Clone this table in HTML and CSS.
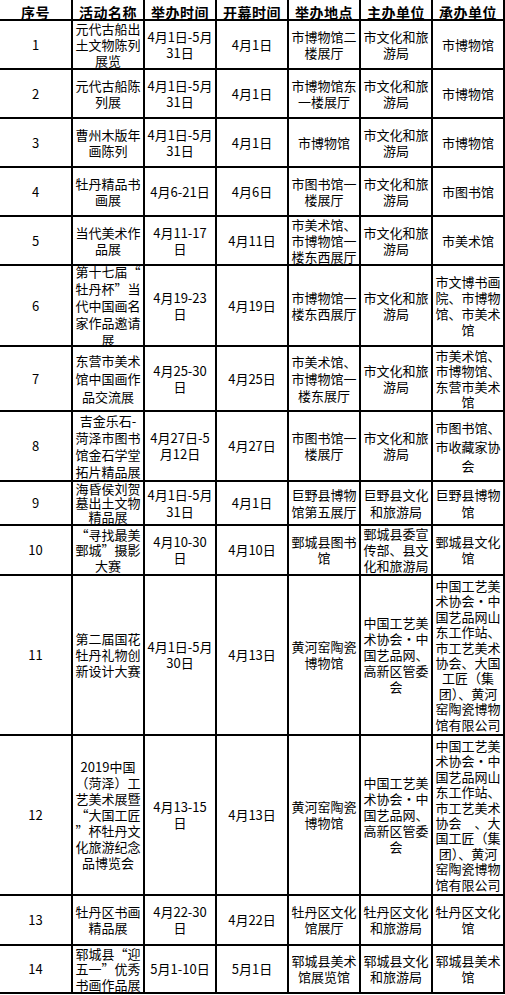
FILE: index.html
```html
<!DOCTYPE html>
<html lang="zh-CN">
<head>
<meta charset="utf-8">
<title>活动安排表</title>
<link rel="stylesheet" href="styles.css">
</head>
<body>
<div class="sheet">
  <div class="cell head">序号</div>
  <div class="cell head">活动名称</div>
  <div class="cell head">举办时间</div>
  <div class="cell head">开幕时间</div>
  <div class="cell head">举办地点</div>
  <div class="cell head">主办单位</div>
  <div class="cell head">承办单位</div>

  <div class="cell">1</div>
  <div class="cell">元代古船出<br>土文物陈列<br>展览</div>
  <div class="cell">4月1日-5月<br>31日</div>
  <div class="cell">4月1日</div>
  <div class="cell">市博物馆二<br>楼展厅</div>
  <div class="cell">市文化和旅<br>游局</div>
  <div class="cell">市博物馆</div>

  <div class="cell">2</div>
  <div class="cell">元代古船陈<br>列展</div>
  <div class="cell">4月1日-5月<br>31日</div>
  <div class="cell">4月1日</div>
  <div class="cell">市博物馆东<br>一楼展厅</div>
  <div class="cell">市文化和旅<br>游局</div>
  <div class="cell">市博物馆</div>

  <div class="cell">3</div>
  <div class="cell">曹州木版年<br>画陈列</div>
  <div class="cell">4月1日-5月<br>31日</div>
  <div class="cell">4月1日</div>
  <div class="cell">市博物馆</div>
  <div class="cell">市文化和旅<br>游局</div>
  <div class="cell">市博物馆</div>

  <div class="cell">4</div>
  <div class="cell">牡丹精品书<br>画展</div>
  <div class="cell">4月6-21日</div>
  <div class="cell">4月6日</div>
  <div class="cell">市图书馆一<br>楼展厅</div>
  <div class="cell">市文化和旅<br>游局</div>
  <div class="cell">市图书馆</div>

  <div class="cell">5</div>
  <div class="cell">当代美术作<br>品展</div>
  <div class="cell">4月11-17<br>日</div>
  <div class="cell">4月11日</div>
  <div class="cell">市美术馆、<br>市博物馆一<br>楼东西展厅</div>
  <div class="cell">市文化和旅<br>游局</div>
  <div class="cell">市美术馆</div>

  <div class="cell">6</div>
  <div class="cell lh17">第十七届“<br>牡丹杯”当<br>代中国画名<br>家作品邀请<br>展</div>
  <div class="cell">4月19-23<br>日</div>
  <div class="cell">4月19日</div>
  <div class="cell">市博物馆一<br>楼东西展厅</div>
  <div class="cell">市文化和旅<br>游局</div>
  <div class="cell">市文博书画<br>院、市博物<br>馆、市美术<br>馆</div>

  <div class="cell">7</div>
  <div class="cell lh18">东营市美术<br>馆中国画作<br>品交流展</div>
  <div class="cell">4月25-30<br>日</div>
  <div class="cell">4月25日</div>
  <div class="cell lh17">市美术馆、<br>市博物馆一<br>楼东展厅</div>
  <div class="cell">市文化和旅<br>游局</div>
  <div class="cell lh15">市美术馆、<br>市博物馆、<br>东营市美术<br>馆</div>

  <div class="cell">8</div>
  <div class="cell lh17">吉金乐石-<br>菏泽市图书<br>馆金石学堂<br>拓片精品展</div>
  <div class="cell">4月27日-5<br>月12日</div>
  <div class="cell">4月27日</div>
  <div class="cell">市图书馆一<br>楼展厅</div>
  <div class="cell">市文化和旅<br>游局</div>
  <div class="cell lh19">市图书馆、<br>市收藏家协<br>会</div>

  <div class="cell">9</div>
  <div class="cell lh14">海昏侯刘贺<br>墓出土文物<br>精品展</div>
  <div class="cell lh17">4月1日-5月<br>31日</div>
  <div class="cell">4月1日</div>
  <div class="cell lh17">巨野县博物<br>馆第五展厅</div>
  <div class="cell lh17">巨野县文化<br>和旅游局</div>
  <div class="cell lh17">巨野县博物<br>馆</div>

  <div class="cell">10</div>
  <div class="cell lh15">“寻找最美<br>鄄城”摄影<br>大赛</div>
  <div class="cell">4月10-30<br>日</div>
  <div class="cell">4月10日</div>
  <div class="cell">鄄城县图书<br>馆</div>
  <div class="cell">鄄城县委宣<br>传部、县文<br>化和旅游局</div>
  <div class="cell">鄄城县文化<br>馆</div>

  <div class="cell">11</div>
  <div class="cell">第二届国花<br>牡丹礼物创<br>新设计大赛</div>
  <div class="cell">4月1日-5月<br>30日</div>
  <div class="cell">4月13日</div>
  <div class="cell">黄河窑陶瓷<br>博物馆</div>
  <div class="cell">中国工艺美<br>术协会·中<br>国艺品网、<br>高新区管委<br>会</div>
  <div class="cell lh15">中国工艺美<br>术协会·中<br>国艺品网山<br>东工作站、<br>市工艺美术<br>协会、大国<br>工匠（集<br>团）、黄河<br>窑陶瓷博物<br>馆有限公司</div>

  <div class="cell">12</div>
  <div class="cell">2019中国<br>（菏泽）工<br>艺美术展暨<br>“大国工匠<br>”杯牡丹文<br>化旅游纪念<br>品博览会</div>
  <div class="cell">4月13-15<br>日</div>
  <div class="cell">4月13日</div>
  <div class="cell">黄河窑陶瓷<br>博物馆</div>
  <div class="cell">中国工艺美<br>术协会·中<br>国艺品网、<br>高新区管委<br>会</div>
  <div class="cell lh15">中国工艺美<br>术协会·中<br>国艺品网山<br>东工作站、<br>市工艺美术<br>协会　、大<br>国工匠（集<br>团）、黄河<br>窑陶瓷博物<br>馆有限公司</div>

  <div class="cell">13</div>
  <div class="cell">牡丹区书画<br>精品展</div>
  <div class="cell">4月22-30<br>日</div>
  <div class="cell">4月22日</div>
  <div class="cell">牡丹区文化<br>馆展厅</div>
  <div class="cell">牡丹区文化<br>和旅游局</div>
  <div class="cell">牡丹区文化<br>馆</div>

  <div class="cell">14</div>
  <div class="cell lh15">郓城县“迎<br>五一”优秀<br>书画作品展</div>
  <div class="cell">5月1-10日</div>
  <div class="cell">5月1日</div>
  <div class="cell">郓城县美术<br>馆展览馆</div>
  <div class="cell">郓城县文化<br>和旅游局</div>
  <div class="cell">郓城县美术<br>馆</div>
</div>
</body>
</html>
```

FILE: styles.css
```css
html, body {
  margin: 0;
  padding: 0;
  background: #ffffff;
  overflow: hidden;
}

body {
  font-family: "Noto Sans CJK SC", "Noto Sans", sans-serif;
  color: #000000;
}

.sheet {
  display: grid;
  grid-template-columns: 71px repeat(6, 70px);
  grid-template-rows: 19px 47px 47px 47px 47px 47px 79px 63px 68px 42px 48px 158px 158px 48px 46px;
  gap: 2px;
  width: max-content;
  background: #000000;
  border: 2px solid #000000;
  margin: -2px 0 0 -2px;
}

.cell {
  background: #ffffff;
  display: flex;
  align-items: center;
  justify-content: center;
  text-align: center;
  font-size: 13px;
  line-height: 16px;
  white-space: nowrap;
  overflow: visible;
}

.cell.lh14 { line-height: 14px; }
.cell.lh15 { line-height: 15.4px; }
.cell.lh17 { line-height: 17px; }
.cell.lh18 { line-height: 18px; }
.cell.lh19 { line-height: 19px; }

.cell.head {
  font-size: 14px;
  font-weight: 700;
  line-height: 16px;
  padding-top: 5px;
  letter-spacing: 0.5px;
}
```
